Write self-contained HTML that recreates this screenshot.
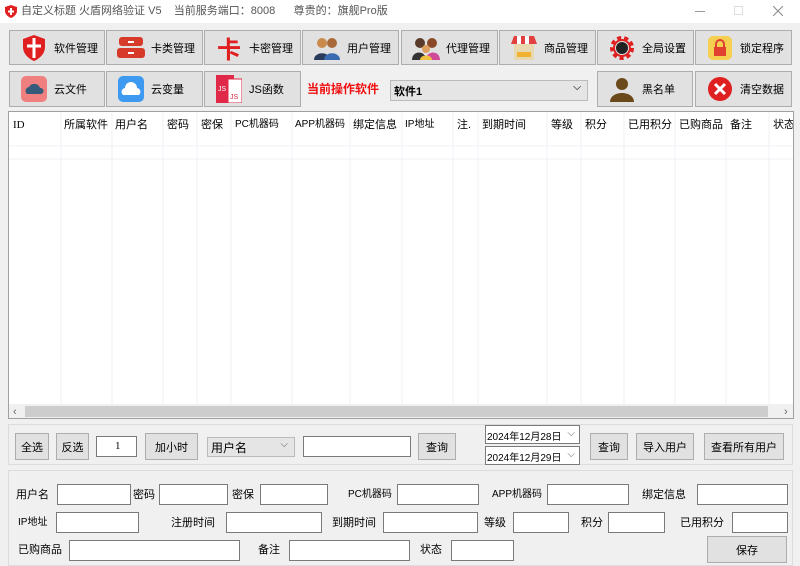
<!DOCTYPE html>
<html><head><meta charset="utf-8"><style>
*{box-sizing:border-box;margin:0;padding:0}
body{width:800px;height:565px;background:#f0f0f0;font-family:"Liberation Sans","Noto Sans CJK SC",sans-serif;font-size:11px;color:#000;position:relative;overflow:hidden}
.a{position:absolute}
.btn{position:absolute;background:#e1e1e1;border:1px solid #adadad;display:flex;align-items:center;justify-content:center;font-size:11px;white-space:nowrap}
.big{justify-content:flex-start}
.big .ic{width:28px;height:28px;margin:0 6px 0 10px;display:flex;align-items:center;justify-content:center;flex:none}
.inp{position:absolute;background:#fff;border:1px solid #7a7a7a;height:21px}
.lbl{position:absolute;font-size:11px;line-height:14px;white-space:nowrap}
.sel{position:absolute;background:#e5e5e5;border:1px solid #bbb;display:flex;align-items:center;padding-left:3px}
.sel:after{content:"⌵";position:absolute;right:6px;top:1px;color:#555;font-size:10px}
</style></head><body>
<!-- title bar -->
<div class="a" style="left:0;top:0;width:800px;height:23px;background:#fff"></div>
<svg class="a" style="left:5px;top:5px" width="12" height="13" viewBox="0 0 12 13"><path d="M6 0L12 2V6C12 9 9 12 6 13C3 12 0 9 0 6V2Z" fill="#e02020"/><path d="M6 3V10M3 6.5H9" stroke="#fff" stroke-width="2"/></svg>
<div class="lbl" style="left:21px;top:4px;color:#555">自定义标题 火盾网络验证 V5&nbsp;&nbsp;&nbsp;&nbsp;当前服务端口：8008&nbsp;&nbsp;&nbsp;&nbsp;&nbsp;&nbsp;尊贵的：旗舰Pro版</div>
<div class="a" style="left:695px;top:11px;width:10px;height:1px;background:#999"></div>
<div class="a" style="left:734px;top:6px;width:9px;height:9px;border:1px solid #ddd"></div>
<svg class="a" style="left:773px;top:6px" width="10" height="10"><path d="M0 0L10 10M10 0L0 10" stroke="#888" stroke-width="1"/></svg>

<!-- row 1 -->
<div class="btn big" style="left:9px;top:30px;width:96px;height:35px"><span class="ic"><svg width="22" height="26" viewBox="0 0 22 26"><path d="M11 0L22 4V12C22 19 16 24 11 26C6 24 0 19 0 12V4Z" fill="#e02020"/><path d="M11 3V23M4 11H18" stroke="#fff" stroke-width="3"/></svg></span>软件管理</div>
<div class="btn big" style="left:106px;top:30px;width:97px;height:35px"><span class="ic"><svg width="28" height="22"><rect x="2" y="0" width="24" height="9" rx="3" fill="#d83a2a"/><rect x="0" y="11" width="28" height="10" rx="3" fill="#d83a2a"/><rect x="11" y="4" width="6" height="2" fill="#fff"/><rect x="11" y="15" width="6" height="2" fill="#fff"/></svg></span>卡类管理</div>
<div class="btn big" style="left:204px;top:30px;width:97px;height:35px"><span class="ic" style="color:#e02020;font-size:24px;font-weight:bold">卡</span>卡密管理</div>
<div class="btn big" style="left:302px;top:30px;width:97px;height:35px"><span class="ic"><svg width="28" height="24"><circle cx="9" cy="7" r="5" fill="#c98a4b"/><circle cx="19" cy="7" r="5" fill="#a86a3a"/><path d="M1 24C1 15 17 15 17 24Z" fill="#2a3a5a"/><path d="M11 24C11 15 27 15 27 24Z" fill="#3a6ab0"/></svg></span>用户管理</div>
<div class="btn big" style="left:401px;top:30px;width:97px;height:35px"><span class="ic"><svg width="28" height="24"><circle cx="8" cy="7" r="5" fill="#5a3a2a"/><circle cx="20" cy="7" r="5" fill="#8a4a2a"/><circle cx="14" cy="13" r="4" fill="#e0a060"/><path d="M0 24C0 14 14 14 14 24Z" fill="#333"/><path d="M14 24C14 14 28 14 28 24Z" fill="#d04a9a"/><path d="M8 24C8 18 20 18 20 24Z" fill="#f0c040"/></svg></span>代理管理</div>
<div class="btn big" style="left:499px;top:30px;width:97px;height:35px"><span class="ic"><svg width="26" height="24"><path d="M0 8L3 0H23L26 8Z" fill="#e04040"/><path d="M6 0H10V8H6ZM14 0H18V8H14Z" fill="#fff"/><rect x="3" y="8" width="20" height="16" fill="#e8d8b0"/><rect x="6" y="16" width="14" height="5" fill="#f0b030"/></svg></span>商品管理</div>
<div class="btn big" style="left:597px;top:30px;width:97px;height:35px"><span class="ic"><svg width="26" height="26" viewBox="0 0 26 26"><circle cx="13" cy="13" r="10" fill="none" stroke="#e02020" stroke-width="4" stroke-dasharray="4 3"/><circle cx="13" cy="13" r="8" fill="none" stroke="#e02020" stroke-width="2"/><circle cx="13" cy="13" r="6" fill="#222"/></svg></span>全局设置</div>
<div class="btn big" style="left:695px;top:30px;width:97px;height:35px"><span class="ic"><svg width="24" height="24"><rect width="24" height="24" rx="5" fill="#f5cf50"/><rect x="6" y="11" width="12" height="9" fill="#e04030"/><path d="M8 11V8A4 4 0 0 1 16 8V11" fill="none" stroke="#e04030" stroke-width="2"/></svg></span>锁定程序</div>

<!-- row 2 -->
<div class="btn big" style="left:9px;top:71px;width:96px;height:36px"><span class="ic"><svg width="26" height="26"><rect width="26" height="26" rx="5" fill="#f08080"/><path d="M6 18A4 4 0 0 1 8 11A6 6 0 0 1 19 12A3 3 0 0 1 20 18Z" fill="#355a7a"/></svg></span>云文件</div>
<div class="btn big" style="left:106px;top:71px;width:97px;height:36px"><span class="ic"><svg width="26" height="26"><rect width="26" height="26" rx="5" fill="#3d9af0"/><path d="M5 19A4 4 0 0 1 7 12A6 6 0 0 1 19 12A4 4 0 0 1 21 19Z" fill="#fff"/></svg></span>云变量</div>
<div class="btn big" style="left:204px;top:71px;width:97px;height:36px"><span class="ic"><svg width="26" height="28"><rect x="0" y="0" width="18" height="28" fill="#e02848"/><rect x="12" y="4" width="14" height="24" fill="#fff" stroke="#e02848"/><text x="2" y="16" font-size="7" fill="#fff" font-family="Liberation Sans">JS</text><text x="14" y="24" font-size="7" fill="#e02848" font-family="Liberation Sans">JS</text></svg></span>JS函数</div>
<div class="lbl" style="left:307px;top:82px;color:#f01010;font-weight:bold;font-size:12px">当前操作软件</div>
<div class="sel" style="left:390px;top:80px;width:198px;height:21px;font-weight:bold">软件1</div>
<div class="btn big" style="left:597px;top:71px;width:96px;height:36px"><span class="ic"><svg width="24" height="26"><circle cx="12" cy="8" r="6" fill="#6a4a1a"/><path d="M0 26C0 14 24 14 24 26Z" fill="#6a4a1a"/></svg></span>黑名单</div>
<div class="btn big" style="left:695px;top:71px;width:97px;height:36px"><span class="ic"><svg width="26" height="26"><circle cx="13" cy="13" r="12" fill="#e02020"/><path d="M8 8L18 18M18 8L8 18" stroke="#fff" stroke-width="3"/></svg></span>清空数据</div>

<!-- table -->
<div class="a" style="left:8px;top:111px;width:786px;height:308px;background:#fff;border:1px solid #a0a0a0;overflow:hidden">
<svg class="a" style="left:0;top:0" width="786" height="292">
<g stroke="#eef1f5">
<line x1="52" y1="0" x2="52" y2="292"/><line x1="103" y1="0" x2="103" y2="292"/><line x1="154" y1="0" x2="154" y2="292"/><line x1="188" y1="0" x2="188" y2="292"/><line x1="222" y1="0" x2="222" y2="292"/><line x1="283" y1="0" x2="283" y2="292"/><line x1="341" y1="0" x2="341" y2="292"/><line x1="393" y1="0" x2="393" y2="292"/><line x1="444" y1="0" x2="444" y2="292"/><line x1="469" y1="0" x2="469" y2="292"/><line x1="538" y1="0" x2="538" y2="292"/><line x1="572" y1="0" x2="572" y2="292"/><line x1="615" y1="0" x2="615" y2="292"/><line x1="666" y1="0" x2="666" y2="292"/><line x1="717" y1="0" x2="717" y2="292"/><line x1="760" y1="0" x2="760" y2="292"/>
<line x1="0" y1="34" x2="786" y2="34"/><line x1="0" y1="47" x2="786" y2="47"/>
</g>
</svg>
<div class="lbl" style="left:4px;top:6px;font-family:'Liberation Serif',serif">ID</div>
<div class="lbl" style="left:55px;top:6px">所属软件</div>
<div class="lbl" style="left:106px;top:6px">用户名</div>
<div class="lbl" style="left:158px;top:6px">密码</div>
<div class="lbl" style="left:192px;top:6px">密保</div>
<div class="lbl" style="left:226px;top:6px;font-size:10px">PC机器码</div>
<div class="lbl" style="left:286px;top:6px;font-size:10px">APP机器码</div>
<div class="lbl" style="left:344px;top:6px">绑定信息</div>
<div class="lbl" style="left:396px;top:6px;font-size:10px">IP地址</div>
<div class="lbl" style="left:448px;top:6px">注.</div>
<div class="lbl" style="left:473px;top:6px">到期时间</div>
<div class="lbl" style="left:542px;top:6px">等级</div>
<div class="lbl" style="left:576px;top:6px">积分</div>
<div class="lbl" style="left:619px;top:6px">已用积分</div>
<div class="lbl" style="left:670px;top:6px">已购商品</div>
<div class="lbl" style="left:721px;top:6px">备注</div>
<div class="lbl" style="left:764px;top:6px">状态</div>
<div class="a" style="left:0;top:292px;width:786px;height:15px;background:#f0f0f0"></div>
<div class="a" style="left:16px;top:294px;width:743px;height:11px;background:#cdcdcd"></div>
<div class="lbl" style="left:4px;top:293px;color:#666">‹</div>
<div class="lbl" style="left:775px;top:293px;color:#666">›</div>
</div>

<!-- panel 1 -->
<div class="a" style="left:8px;top:424px;width:785px;height:41px;border:1px solid #dcdcdc"></div>
<div class="btn" style="left:15px;top:433px;width:34px;height:27px">全选</div>
<div class="btn" style="left:56px;top:433px;width:33px;height:27px">反选</div>
<div class="inp" style="left:96px;top:436px;width:41px;padding:3px 0 0 18px;font-family:'Liberation Serif',serif">1</div>
<div class="btn" style="left:145px;top:433px;width:53px;height:27px">加小时</div>
<div class="sel" style="left:207px;top:437px;width:88px;height:20px;font-size:12px">用户名</div>
<div class="inp" style="left:303px;top:436px;width:108px"></div>
<div class="btn" style="left:418px;top:433px;width:38px;height:27px">查询</div>
<div class="inp" style="left:485px;top:425px;width:95px;height:19px;font-size:10px;padding:2px 0 0 1px">2024年12月28日<span style="position:absolute;right:4px;color:#666">⌵</span></div>
<div class="inp" style="left:485px;top:446px;width:95px;height:19px;font-size:10px;padding:2px 0 0 1px">2024年12月29日<span style="position:absolute;right:4px;color:#666">⌵</span></div>
<div class="btn" style="left:590px;top:433px;width:38px;height:27px">查询</div>
<div class="btn" style="left:636px;top:433px;width:58px;height:27px">导入用户</div>
<div class="btn" style="left:704px;top:433px;width:80px;height:27px">查看所有用户</div>

<!-- panel 2 -->
<div class="a" style="left:8px;top:470px;width:785px;height:96px;border:1px solid #dcdcdc"></div>
<div class="lbl" style="left:16px;top:488px">用户名</div><div class="inp" style="left:57px;top:484px;width:74px"></div>
<div class="lbl" style="left:133px;top:488px">密码</div><div class="inp" style="left:159px;top:484px;width:69px"></div>
<div class="lbl" style="left:232px;top:488px">密保</div><div class="inp" style="left:260px;top:484px;width:68px"></div>
<div class="lbl" style="left:348px;top:488px;font-size:10px">PC机器码</div><div class="inp" style="left:397px;top:484px;width:82px"></div>
<div class="lbl" style="left:492px;top:488px;font-size:10px">APP机器码</div><div class="inp" style="left:547px;top:484px;width:82px"></div>
<div class="lbl" style="left:642px;top:488px">绑定信息</div><div class="inp" style="left:697px;top:484px;width:91px"></div>

<div class="lbl" style="left:18px;top:516px;font-size:10px">IP地址</div><div class="inp" style="left:56px;top:512px;width:83px"></div>
<div class="lbl" style="left:171px;top:516px">注册时间</div><div class="inp" style="left:226px;top:512px;width:96px"></div>
<div class="lbl" style="left:332px;top:516px">到期时间</div><div class="inp" style="left:383px;top:512px;width:95px"></div>
<div class="lbl" style="left:484px;top:516px">等级</div><div class="inp" style="left:513px;top:512px;width:56px"></div>
<div class="lbl" style="left:581px;top:516px">积分</div><div class="inp" style="left:608px;top:512px;width:57px"></div>
<div class="lbl" style="left:680px;top:516px">已用积分</div><div class="inp" style="left:732px;top:512px;width:56px"></div>

<div class="lbl" style="left:18px;top:543px">已购商品</div><div class="inp" style="left:69px;top:540px;width:171px"></div>
<div class="lbl" style="left:258px;top:543px">备注</div><div class="inp" style="left:289px;top:540px;width:121px"></div>
<div class="lbl" style="left:420px;top:543px">状态</div><div class="inp" style="left:451px;top:540px;width:63px"></div>
<div class="btn" style="left:707px;top:536px;width:80px;height:27px">保存</div>
</body></html>
